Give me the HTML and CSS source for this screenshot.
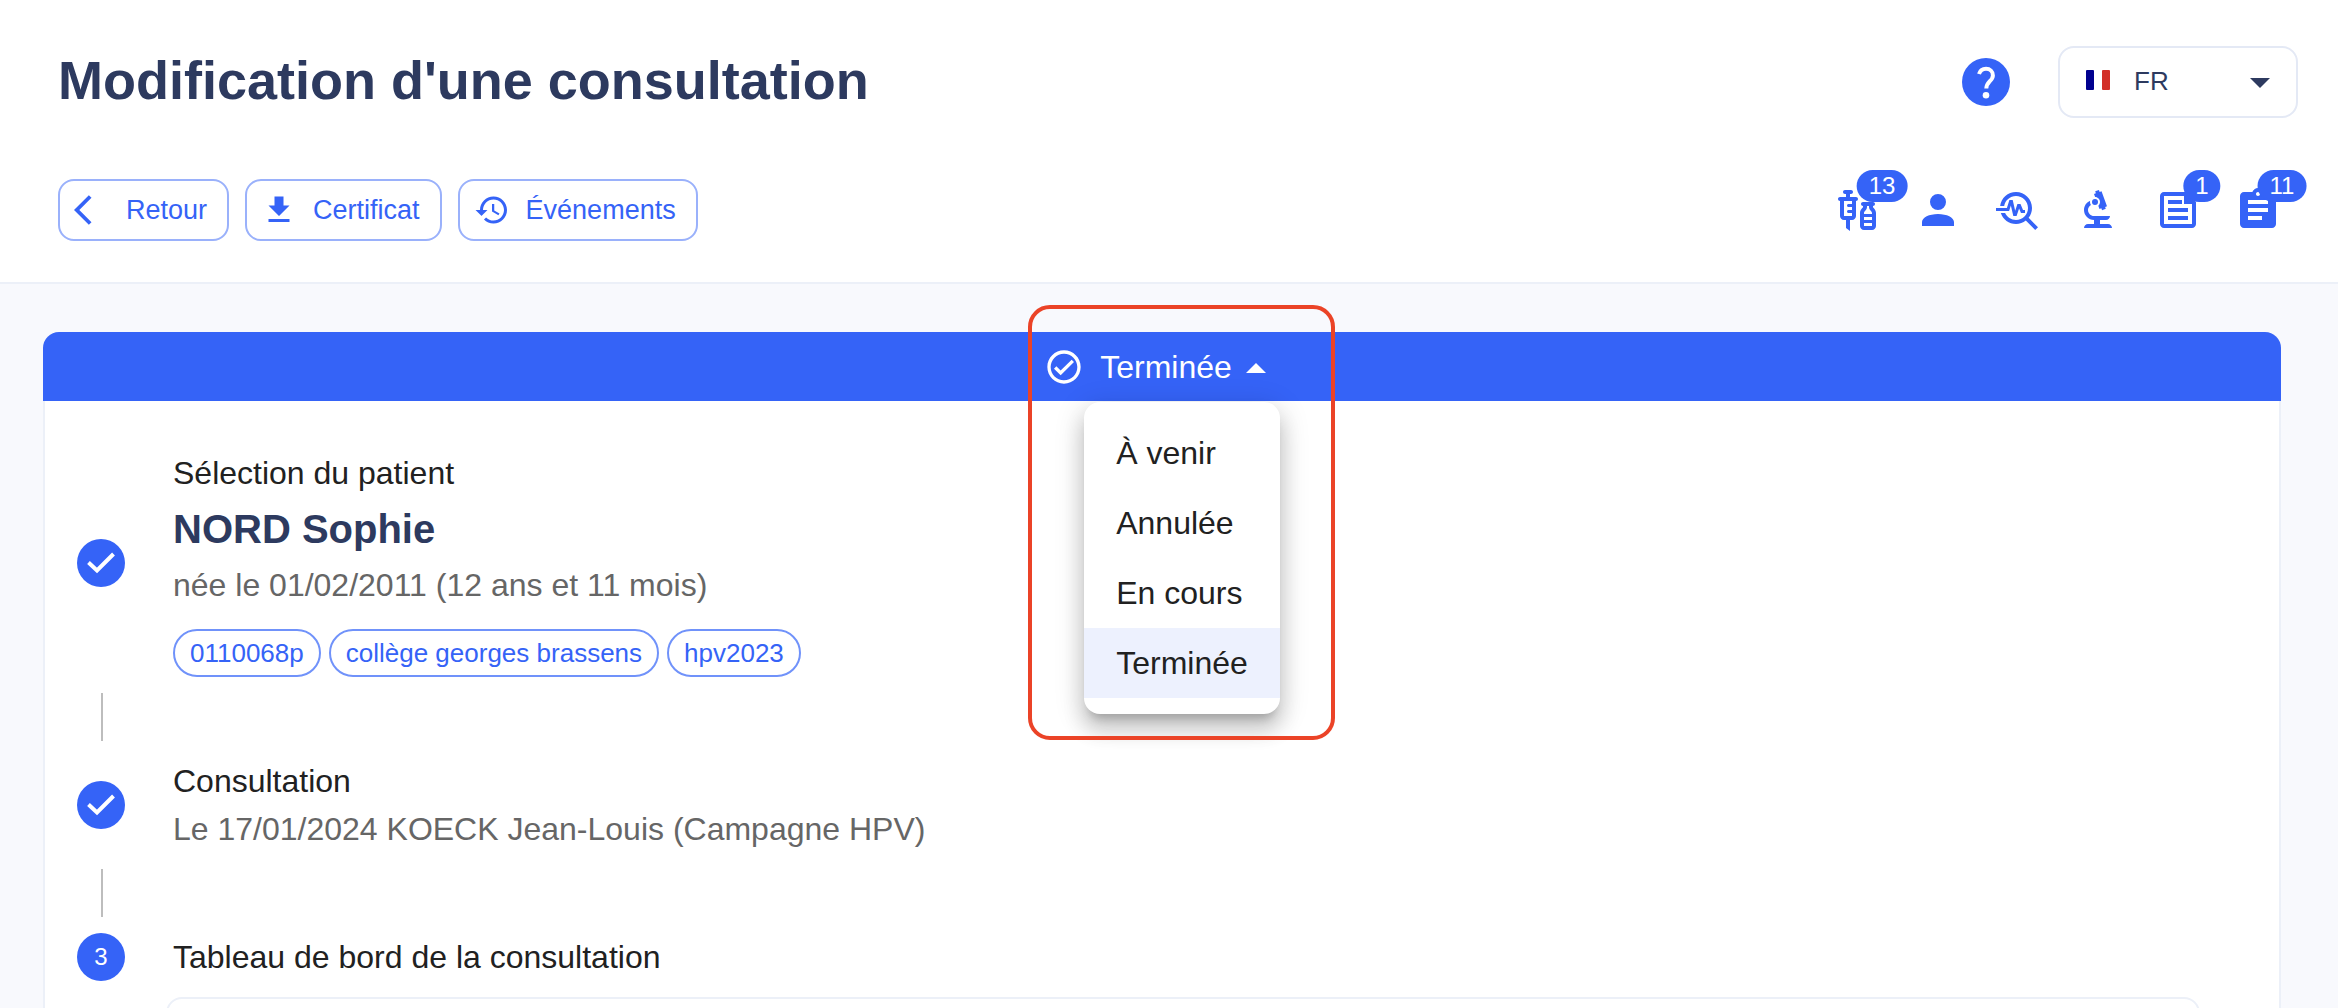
FILE: index.html
```html
<!DOCTYPE html>
<html lang="fr">
<head>
    <meta charset="UTF-8">
    <title>Modification d'une consultation</title>
    <link rel="stylesheet" href="styles.css">
</head>
<body>
<div class="page">
    <header class="header">
        <div class="headerTop">
            <h1 class="title">Modification d'une consultation</h1>
            <div class="headerTools">
                <button type="button" class="iconBtn" aria-label="Aide">
                    <svg class="help" viewBox="0 0 48 48"><circle cx="24" cy="24" r="24"/><path class="stroke" d="M17 16c1-3.300 3.700-5.200 7-5.200 4 0 6.900 2.700 6.900 6.600 0 5.600-6.600 6.300-6.600 13.200"/><circle class="dot" cx="24" cy="37.300" r="3.300"/></svg>
                </button>
                <div class="lang">
                    <svg class="flag" viewBox="0 0 24 20"><rect width="8" height="20" rx="1" fill="#00008f"/><rect x="16" width="8" height="20" rx="1" fill="#d22f27"/></svg>
                    <select class="langSelect" aria-label="Langue">
                        <option>FR</option>
                        <option>EN</option>
                    </select>
                    <svg class="langArrow" viewBox="0 0 24 24"><path d="M7 10l5 5 5-5z"/></svg>
                </div>
            </div>
        </div>
        <div class="toolbar">
            <div class="actions">
                <button type="button" class="btn">
                    <svg viewBox="0 0 24 24"><path d="M11.67 3.87L9.9 2.1 0 12l9.9 9.9 1.77-1.77L3.54 12z"/></svg>
                    Retour
                </button>
                <button type="button" class="btn">
                    <svg viewBox="0 0 24 24"><path d="M19 9h-4V3H9v6H5l7 7 7-7zM5 18v2h14v-2H5z"/></svg>
                    Certificat
                </button>
                <button type="button" class="btn">
                    <svg viewBox="0 0 24 24"><path d="M13 3c-4.97 0-9 4.03-9 9H1l3.89 3.89.07.14L9 12H6c0-3.87 3.13-7 7-7s7 3.13 7 7-3.13 7-7 7c-1.93 0-3.68-.79-4.94-2.06l-1.42 1.42C8.27 19.99 10.51 21 13 21c4.97 0 9-4.03 9-9s-4.03-9-9-9zm-1 5v5l4.28 2.54.72-1.21-3.5-2.08V8H12z"/></svg>
                    Événements
                </button>
            </div>
            <nav class="shortcuts">
                <button type="button" class="iconBtn" aria-label="Vaccins">
                    <svg viewBox="0 0 24 24"><path d="M11 5.5H8V4h.5c.55 0 1-.45 1-1s-.45-1-1-1h-3c-.55 0-1 .45-1 1s.45 1 1 1H6v1.5H3c-.55 0-1 .45-1 1s.45 1 1 1V15c0 1.1.9 2 2 2h1v4l2 1.5V17h1c1.1 0 2-.9 2-2V7.5c.55 0 1-.45 1-1s-.45-1-1-1zM9 9H7.25c-.41 0-.75.34-.75.75s.34.75.75.75H9V12H7.25c-.41 0-.75.34-.75.75s.34.75.75.75H9V15H5V7.5h4V9zM19.5 10.5V10c.55 0 1-.45 1-1s-.45-1-1-1h-5c-.55 0-1 .45-1 1s.45 1 1 1v.5c0 .5-1.5 1.16-1.5 3V20c0 1.1.9 2 2 2h4c1.1 0 2-.9 2-2v-6.5c0-1.84-1.5-2.5-1.5-3zM16.5 10.5V10h1v.5c0 1.6 1.5 2 1.5 3V14h-4v-.5c0-1 1.5-1.4 1.5-3zM19 15.5V17h-4v-1.5h4zM15 20v-1.5h4V20h-4z"/></svg>
                    <span class="badge">13</span>
                </button>
                <button type="button" class="iconBtn" aria-label="Patient">
                    <svg viewBox="0 0 24 24"><path d="M12 4a4 4 0 0 1 4 4 4 4 0 0 1-4 4 4 4 0 0 1-4-4 4 4 0 0 1 4-4m0 10c4.42 0 8 1.79 8 4v2H4v-2c0-2.21 3.58-4 8-4z"/></svg>
                </button>
                <button type="button" class="iconBtn" aria-label="Diagnostic">
                    <svg viewBox="0 0 24 24"><path d="M22 20.59l-4.69-4.69C18.37 14.55 19 12.85 19 11c0-4.42-3.58-8-8-8-4.08 0-7.44 3.05-7.93 7h2.02C5.57 7.17 8.03 5 11 5c3.31 0 6 2.69 6 6s-2.69 6-6 6c-2.42 0-4.5-1.44-5.45-3.5H3.4C4.45 16.69 7.46 19 11 19c1.85 0 3.55-.63 4.9-1.69L20.59 22 22 20.59z"/><path d="M8.43 9.69L9.65 15h1.64l1.26-3.78.95 2.28h2V12h-1l-1.25-3h-1.54l-1.12 3.37L9.35 7H7.7l-1.25 4H1v1.5h6.55z"/></svg>
                </button>
                <button type="button" class="iconBtn" aria-label="Analyses">
                    <svg viewBox="0 0 24 24"><path d="M7 19c-1.1 0-2 .9-2 2h14c0-1.1-.9-2-2-2h-4v-2h3c1.1 0 2-.9 2-2h-8c-1.66 0-3-1.34-3-3 0-1.09.59-2.04 1.46-2.56C8.17 9.03 8 8.54 8 8c0-.21.04-.42.09-.62C6.28 8.13 5 9.92 5 12c0 2.76 2.24 5 5 5v2H7z"/><path d="M10.56 5.51C11.91 5.54 13 6.64 13 8c0 .75-.33 1.41-.85 1.87l.59 1.62.94-.34.34.94 1.88-.68-.34-.94.94-.34L13.76 2.6l-.94.34L12.48 2 10.6 2.68l.34.94-.94.35.56 1.54z"/><circle cx="10.5" cy="8" r="1.5"/></svg>
                </button>
                <button type="button" class="iconBtn" aria-label="Notes">
                    <svg viewBox="0 0 24 24"><path d="M16 3H5c-1.1 0-2 .9-2 2v14c0 1.1.9 2 2 2h14c1.1 0 2-.9 2-2V8l-5-5zm3 16H5V5h10v4h4v10zM7 17h10v-2H7v2zm0-4h10v-2H7v2zm0-6v2h7V7H7z"/></svg>
                    <span class="badge">1</span>
                </button>
                <button type="button" class="iconBtn" aria-label="Tâches">
                    <svg viewBox="0 0 24 24"><path d="M19 3h-4.18C14.4 1.84 13.3 1 12 1s-2.4.84-2.82 2H5c-1.1 0-2 .9-2 2v14c0 1.1.9 2 2 2h14c1.1 0 2-.9 2-2V5c0-1.1-.9-2-2-2zm-7 0c.55 0 1 .45 1 1s-.45 1-1 1-1-.45-1-1 .45-1 1-1zm2 14H7v-2h7v2zm3-4H7v-2h10v2zm0-4H7V7h10v2z"/></svg>
                    <span class="badge">11</span>
                </button>
            </nav>
        </div>
    </header>

    <main class="main">
        <section class="card">
            <div class="cardHead">
                <div class="status">
                    <button type="button" class="statusBtn" aria-haspopup="true" aria-expanded="true">
                        <svg class="statusIcon" viewBox="0 0 24 24"><path d="M12 2C6.5 2 2 6.5 2 12s4.500 10 10 10 10-4.500 10-10S17.500 2 12 2m0 18c-4.410 0-8-3.590-8-8s3.590-8 8-8 8 3.590 8 8-3.590 8-8 8m4.590-12.420L10 14.170l-2.590-2.580L6 13l4 4 8-8z"/></svg>
                        Terminée
                        <svg class="statusArrow" viewBox="0 0 24 24"><path d="M7 15l5-5 5 5z"/></svg>
                    </button>
                    <div class="menu">
                        <button type="button" class="menuItem">À venir</button>
                        <button type="button" class="menuItem">Annulée</button>
                        <button type="button" class="menuItem">En cours</button>
                        <button type="button" class="menuItem active">Terminée</button>
                    </div>
                    <div class="highlight"></div>
                </div>
            </div>
            <div class="cardBody">
                <div class="step">
                    <span class="stepIcon"><svg viewBox="0 0 48 48"><path class="stroke" d="M11.500 23.500l8.500 8L36.500 15"/></svg></span>
                    <div class="stepText">
                        <p>Sélection du patient</p>
                        <h2 class="patient">NORD Sophie</h2>
                        <p class="sub">née le 01/02/2011 (12 ans et 11 mois)</p>
                        <div class="chips">
                            <span class="chip">0110068p</span>
                            <span class="chip">collège georges brassens</span>
                            <span class="chip">hpv2023</span>
                        </div>
                    </div>
                </div>
                <div class="line"></div>
                <div class="step">
                    <span class="stepIcon"><svg viewBox="0 0 48 48"><path class="stroke" d="M11.500 23.500l8.500 8L36.500 15"/></svg></span>
                    <div>
                        <p>Consultation</p>
                        <p class="sub">Le 17/01/2024 KOECK Jean-Louis (Campagne HPV)</p>
                    </div>
                </div>
                <div class="line"></div>
                <div class="step">
                    <span class="stepIcon">3</span>
                    <p>Tableau de bord de la consultation</p>
                </div>
                <div class="dashboard"></div>
            </div>
        </section>
    </main>
</div>
</body>
</html>
```
FILE: styles.css
```css
*{
    box-sizing:border-box;
    margin:0;
    padding:0;
}
body{
    font-family:"Liberation Sans",Arial,sans-serif;
    font-size:32px;
    line-height:48px;
    color:#212121;
    background:#f8f9fd;
}
button,select{
    font:inherit;
    color:inherit;
    background:none;
    border:none;
    cursor:pointer;
}
svg{
    display:block;
    flex:none;
    fill:currentColor;
}
.stroke{
    fill:none;
    stroke:#fff;
    stroke-width:4;
}
.page{
    display:flex;
    flex-direction:column;
    height:100vh;
    overflow:hidden;
}

/* header */
.header{
    flex:none;
    padding:46px 40px 41px 58px;
    background:#fff;
    border-bottom:2px solid #ecf0f8;
}
.headerTop,.toolbar{
    display:flex;
    align-items:center;
    justify-content:space-between;
}
.title{
    padding-bottom:4px;
    font-size:54px;
    line-height:68px;
    color:#2d3a5f;
}
.headerTools{
    display:flex;
    align-items:center;
    gap:48px;
}
.iconBtn{
    position:relative;
    width:48px;
    height:48px;
    color:#3563f7;
}
.iconBtn svg{
    width:48px;
    height:48px;
}
.help .dot{
    fill:#fff;
}
.lang{
    position:relative;
    width:240px;
    height:72px;
    color:#2d3a5f;
}
.langSelect{
    width:100%;
    height:100%;
    padding:0 72px 2px 74px;
    font-size:26px;
    border:2px solid #e4e9f5;
    border-radius:16px;
    appearance:none;
}
.flag{
    position:absolute;
    left:28px;
    top:24px;
    width:24px;
    height:20px;
}
.langArrow{
    position:absolute;
    right:14px;
    top:12px;
    width:48px;
    height:48px;
    pointer-events:none;
}
.toolbar{
    margin-top:61px;
    padding-right:16px;
}
.actions{
    display:flex;
    gap:16px;
}
.btn{
    display:flex;
    align-items:center;
    gap:16px;
    height:62px;
    padding:0 20px 0 14px;
    font-size:27px;
    color:#3563f7;
    border:2px solid #9ab1fb;
    border-radius:16px;
}
.btn svg{
    width:36px;
    height:36px;
}
.shortcuts{
    display:flex;
    gap:32px;
}
.badge{
    position:absolute;
    left:48px;
    top:-16px;
    padding:0 12px;
    font-size:24px;
    line-height:32px;
    color:#fff;
    background:#3563f7;
    border-radius:16px;
    transform:translateX(-50%);
}

/* card */
.main{
    flex:1;
    padding:48px 57px 0 43px;
}
.cardHead{
    display:flex;
    justify-content:center;
    height:69px;
    color:#fff;
    background:#3563f7;
    border-radius:16px 16px 0 0;
}
.status{
    position:relative;
}
.statusBtn{
    display:flex;
    align-items:center;
    height:100%;
}
.statusIcon{
    width:40px;
    height:40px;
    margin-right:16px;
}
.statusArrow{
    width:48px;
    height:48px;
}
.menu{
    position:absolute;
    right:0;
    top:70px;
    z-index:1;
    display:flex;
    flex-direction:column;
    padding:16px 0;
    color:#212121;
    background:#fff;
    border-radius:16px;
    box-shadow:0 10px 10px -6px rgba(0,0,0,.2),0 16px 20px 2px rgba(0,0,0,.14),0 6px 28px 4px rgba(0,0,0,.12);
}
.menuItem{
    padding:0 32px;
    line-height:70px;
    text-align:left;
}
.menuItem.active{
    background:#edf1fe;
}
.highlight{
    position:absolute;
    left:-16px;
    right:-55px;
    top:-27px;
    z-index:2;
    height:435px;
    border:4px solid #eb4327;
    border-radius:22px;
    pointer-events:none;
}
.cardBody{
    padding:48px 79px 48px 32px;
    background:#fff;
    border:solid #ecf0f8;
    border-width:0 2px 2px;
}

/* stepper */
.step{
    display:flex;
    align-items:center;
    gap:48px;
}
.stepIcon{
    display:flex;
    align-items:center;
    justify-content:center;
    width:48px;
    height:48px;
    font-size:24px;
    color:#fff;
    background:#3563f7;
    border-radius:50%;
}
.stepIcon svg{
    width:48px;
    height:48px;
}
.stepText{
    display:flex;
    flex-direction:column;
    gap:4px;
}
.patient{
    font-size:40px;
    line-height:56px;
    color:#2d3a5f;
}
.sub{
    color:#666;
}
.chips{
    display:flex;
    gap:8px;
    margin-top:16px;
}
.chip{
    padding:0 15px;
    font-size:26px;
    line-height:44px;
    color:#3563f7;
    border:2px solid #7092fa;
    border-radius:24px;
}
.line{
    width:2px;
    height:48px;
    margin:16px 0 16px 24px;
    background:#bdbdbd;
}
.dashboard{
    height:160px;
    margin:16px 0 0 89px;
    border:2px solid #ecf0f8;
    border-radius:16px;
}
```
